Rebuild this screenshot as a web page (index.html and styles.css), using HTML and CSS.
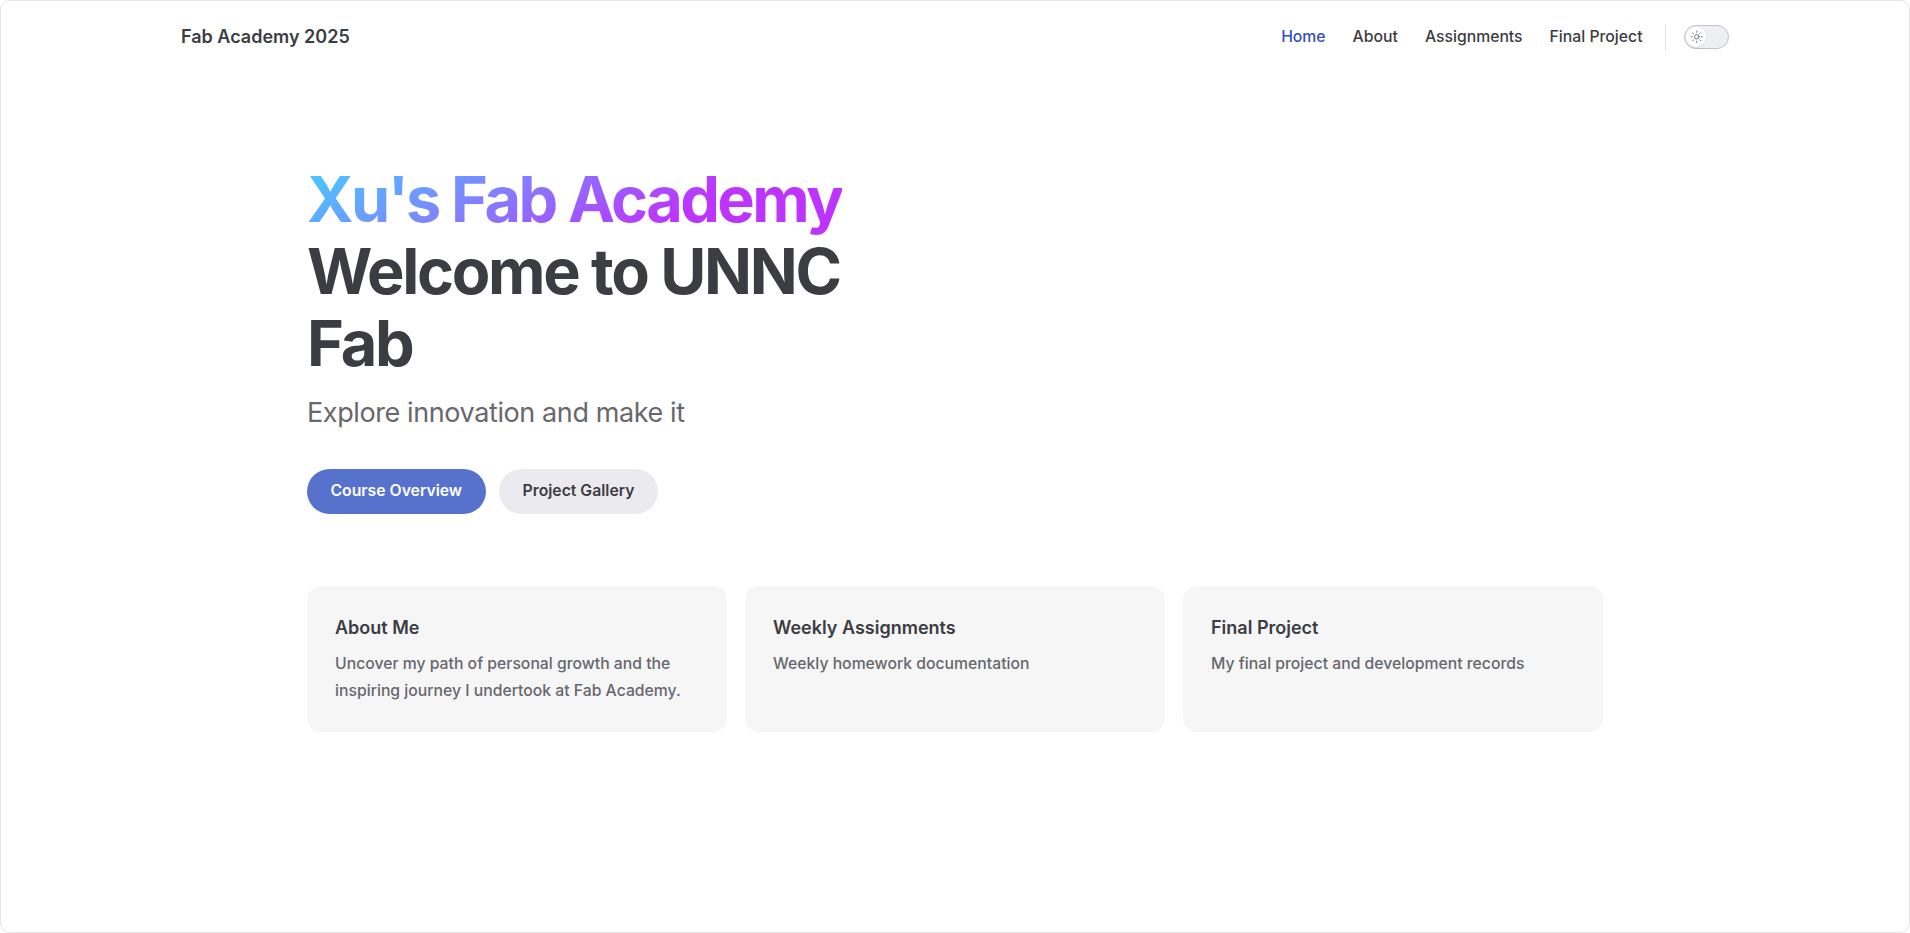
FILE: index.html
```html
<!DOCTYPE html>
<html lang="en">
<head>
<meta charset="utf-8">
<title>Xu's Fab Academy</title>
<link rel="stylesheet" href="styles.css">
</head>
<body>
<div class="frame">
  <header class="nav">
    <div class="nav-inner">
      <a class="nav-title" href="#">Fab Academy 2025</a>
      <div class="nav-content">
        <nav class="menu">
          <a class="menu-link active" href="#">Home</a>
          <a class="menu-link" href="#">About</a>
          <a class="menu-link" href="#">Assignments</a>
          <a class="menu-link" href="#">Final Project</a>
        </nav>
        <div class="appearance">
          <span class="divider"></span>
          <button class="switch" type="button" aria-label="Switch to dark theme">
            <span class="check">
              <svg class="sun" viewBox="0 0 24 24" fill="none" stroke="currentColor" stroke-width="2" stroke-linecap="round" stroke-linejoin="round"><circle cx="12" cy="12" r="4"/><path d="M12 2v2"/><path d="M12 20v2"/><path d="m4.93 4.93 1.41 1.41"/><path d="m17.66 17.66 1.41 1.41"/><path d="M2 12h2"/><path d="M20 12h2"/><path d="m6.34 17.66-1.41 1.41"/><path d="m19.07 4.93-1.41 1.41"/></svg>
            </span>
          </button>
        </div>
      </div>
    </div>
  </header>

  <main class="home">
    <section class="hero">
      <div class="hero-container">
        <h1 class="heading">
          <span class="name"><span class="clip">Xu's Fab Academy</span></span>
          <span class="text">Welcome to UNNC Fab</span>
        </h1>
        <p class="tagline">Explore innovation and make it</p>
        <div class="actions">
          <div class="action"><a class="button brand" href="#">Course Overview</a></div>
          <div class="action"><a class="button alt" href="#">Project Gallery</a></div>
        </div>
      </div>
    </section>

    <section class="features">
      <div class="items">
        <div class="item">
          <a class="feature" href="#">
            <h2 class="feature-title">About Me</h2>
            <p class="feature-details">Uncover my path of personal growth and the inspiring journey I undertook at Fab Academy.</p>
          </a>
        </div>
        <div class="item">
          <a class="feature" href="#">
            <h2 class="feature-title">Weekly Assignments</h2>
            <p class="feature-details">Weekly homework documentation</p>
          </a>
        </div>
        <div class="item">
          <a class="feature" href="#">
            <h2 class="feature-title">Final Project</h2>
            <p class="feature-details">My final project and development records</p>
          </a>
        </div>
      </div>
    </section>
  </main>
</div>
</body>
</html>
```

FILE: styles.css
```css
* {
  box-sizing: border-box;
}

html,
body {
  margin: 0;
  padding: 0;
  background: #ffffff;
}

body {
  font-family: "Inter", "Noto Sans", "Liberation Sans", sans-serif;
  color: #3c3c43;
  -webkit-font-smoothing: antialiased;
  text-rendering: optimizeLegibility;
}

a {
  text-decoration: none;
  color: inherit;
}

h1,
h2,
p {
  margin: 0;
}

.frame {
  height: 933px;
  border: 1px solid #e6e6e6;
  border-radius: 10px;
  overflow: hidden;
  background: #ffffff;
}

/* ---------- nav ---------- */
.nav {
  height: 72px;
}

.nav-inner {
  display: flex;
  justify-content: space-between;
  align-items: center;
  max-width: 1548px;
  height: 72px;
  margin: 0 auto;
}

.nav-title {
  font-size: 18px;
  font-weight: 600;
  color: #3c3c43;
  line-height: 72px;
}

.nav-content {
  display: flex;
  align-items: center;
  height: 72px;
}

.menu {
  display: flex;
}

.menu-link {
  padding: 0 13.5px;
  line-height: 72px;
  font-size: 15.75px;
  font-weight: 500;
  color: #3c3c43;
}

.menu-link.active {
  color: #3451b2;
}

.appearance {
  display: flex;
  align-items: center;
}

.divider {
  display: block;
  width: 1px;
  height: 27px;
  margin: 0 18px 0 9px;
  background: #e2e2e3;
}

.switch {
  position: relative;
  display: block;
  width: 45px;
  height: 24.75px;
  padding: 0;
  border: 1.125px solid #c2c2c4;
  border-radius: 12.4px;
  background: #eeeff2;
  cursor: pointer;
}

.check {
  position: absolute;
  top: 1.125px;
  left: 1.125px;
  width: 20.25px;
  height: 20.25px;
  border-radius: 50%;
  background: #ffffff;
  box-shadow: 0 1px 2px rgba(0, 0, 0, 0.04), 0 1px 2px rgba(0, 0, 0, 0.06);
}

.sun {
  position: absolute;
  top: 3.375px;
  left: 3.375px;
  width: 13.5px;
  height: 13.5px;
  color: #67676c;
  stroke-width: 1.6;
}

/* ---------- hero ---------- */
.hero {
  padding: 90px 72px 72px;
}

.hero-container {
  max-width: 1296px;
  margin: 0 auto;
}

.heading {
  display: flex;
  flex-direction: column;
  margin: 0;
}

.name,
.text {
  width: fit-content;
  max-width: 648px;
  font-size: 63px;
  line-height: 72px;
  font-weight: 700;
  letter-spacing: -2.3px;
  white-space: pre-wrap;
}

.name {
  color: transparent;
  letter-spacing: -2.55px;
}

.clip {
  background: linear-gradient(330deg, #bd34fe 30%, #41d1ff);
  -webkit-background-clip: text;
  background-clip: text;
  -webkit-text-fill-color: transparent;
}

.text {
  color: #3c3c43;
}

.tagline {
  padding-top: 13.5px;
  max-width: 648px;
  font-size: 27px;
  line-height: 40.5px;
  font-weight: 400;
  letter-spacing: -0.4px;
  color: #67676c;
}

.actions {
  display: flex;
  flex-wrap: wrap;
  margin: -6.75px;
  padding-top: 36px;
}

.action {
  flex-shrink: 0;
  padding: 6.75px;
}

.button {
  display: inline-block;
  border: 1.125px solid transparent;
  border-radius: 22.5px;
  padding: 0 22.5px;
  line-height: 42.75px;
  font-size: 15.75px;
  font-weight: 600;
  white-space: nowrap;
  text-align: center;
}

.button.brand {
  background: #5672cd;
  color: #ffffff;
}

.button.alt {
  background: #ebebef;
  color: #3c3c43;
}

/* ---------- features ---------- */
.features {
  padding: 0 72px;
}

.items {
  display: flex;
  flex-wrap: wrap;
  max-width: 1314px;
  margin: -9px auto;
}

.item {
  width: calc(100% / 3);
  padding: 9px;
}

.feature {
  display: flex;
  flex-direction: column;
  height: 100%;
  padding: 27px;
  border: 1.125px solid #f6f6f7;
  border-radius: 13.5px;
  background: #f6f6f7;
}

.feature-title {
  font-size: 18px;
  line-height: 27px;
  font-weight: 600;
  color: #3c3c43;
}

.feature-details {
  flex-grow: 1;
  padding-top: 9px;
  font-size: 15.75px;
  line-height: 27px;
  font-weight: 500;
  color: #67676c;
}
```
